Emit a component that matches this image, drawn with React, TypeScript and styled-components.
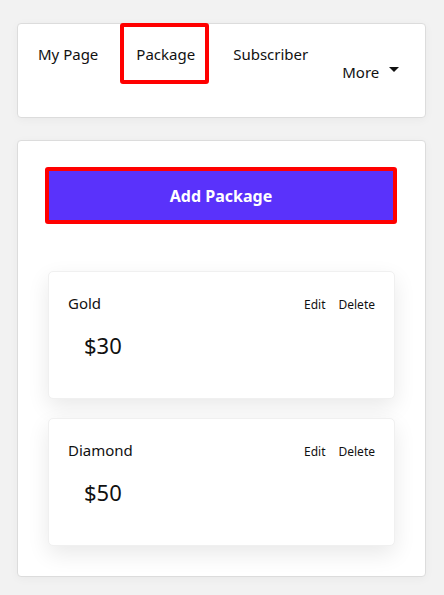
import styled, { createGlobalStyle } from "styled-components";

const GlobalStyle = createGlobalStyle`
  body {
    margin: 0;
    background: #f2f2f2;
    font-family: "Noto Sans", "Open Sans", sans-serif;
    color: #111;
  }
`;

const Page = styled.div`
  display: flex;
  flex-direction: column;
  gap: 22px;
  padding: 23px 18px 18px 17px;
`;

const Card = styled.div`
  background: #fff;
  border: 1px solid #dcdcdc;
  border-radius: 4px;
  box-shadow: 0 2px 10px rgba(0, 0, 0, 0.04);
`;

const Nav = styled.nav`
  display: flex;
  align-items: flex-start;
  gap: 8px;
  height: 94px;
  padding-left: 4px;
  margin-top: -1px;
`;

const NavItem = styled.div<{ $active?: boolean }>`
  display: flex;
  align-items: center;
  box-sizing: border-box;
  height: 61px;
  padding: 0 10px 0 12px;
  border: 4px solid ${({ $active }) => ($active ? "#ff0000" : "transparent")};
  border-radius: 3px;
  font-size: 15px;
  white-space: nowrap;
`;

const MoreItem = styled(NavItem)`
  margin-top: 18px;
  margin-left: -4px;
  gap: 10px;
`;

const Caret = styled.span`
  width: 0;
  height: 0;
  border-left: 5px solid transparent;
  border-right: 5px solid transparent;
  border-top: 5px solid #111;
  margin-top: -4px;
`;

const Body = styled.div`
  display: flex;
  flex-direction: column;
  padding: 26px 28px 30px 27px;
`;

const AddButton = styled.button`
  height: 57px;
  width: 100%;
  background: #5a32fb;
  border: 4px solid #ff0000;
  border-radius: 3px;
  color: #fff;
  font-family: inherit;
  font-size: 16px;
  font-weight: 700;
`;

const List = styled.div`
  display: flex;
  flex-direction: column;
  gap: 19px;
  padding: 47px 2px 0 3px;
`;

const PackageCard = styled.div`
  height: 128px;
  box-sizing: border-box;
  background: #fff;
  border-radius: 5px;
  border: 1px solid #f0f0f0;
  box-shadow: 0 8px 22px rgba(0, 0, 0, 0.09);
  padding: 20px 19px 0 19px;
`;

const CardTop = styled.div`
  display: flex;
  justify-content: space-between;
  align-items: center;
`;

const Name = styled.div`
  font-size: 15px;
`;

const Actions = styled.div`
  display: flex;
  gap: 13px;
  font-size: 12px;
  margin-top: 4px;
`;

const Price = styled.div`
  font-size: 22px;
  padding-left: 16px;
  margin-top: 17px;
`;

const packages = [
  { name: "Gold", price: "$30" },
  { name: "Diamond", price: "$50" },
];

export default function App() {
  return (
    <>
      <GlobalStyle />
      <Page>
        <Card>
          <Nav>
            <NavItem>My Page</NavItem>
            <NavItem $active>Package</NavItem>
            <NavItem>Subscriber</NavItem>
            <MoreItem>
              More <Caret />
            </MoreItem>
          </Nav>
        </Card>
        <Card>
          <Body>
            <AddButton type="button">Add Package</AddButton>
            <List>
              {packages.map((p) => (
                <PackageCard key={p.name}>
                  <CardTop>
                    <Name>{p.name}</Name>
                    <Actions>
                      <span>Edit</span>
                      <span>Delete</span>
                    </Actions>
                  </CardTop>
                  <Price>{p.price}</Price>
                </PackageCard>
              ))}
            </List>
          </Body>
        </Card>
      </Page>
    </>
  );
}
